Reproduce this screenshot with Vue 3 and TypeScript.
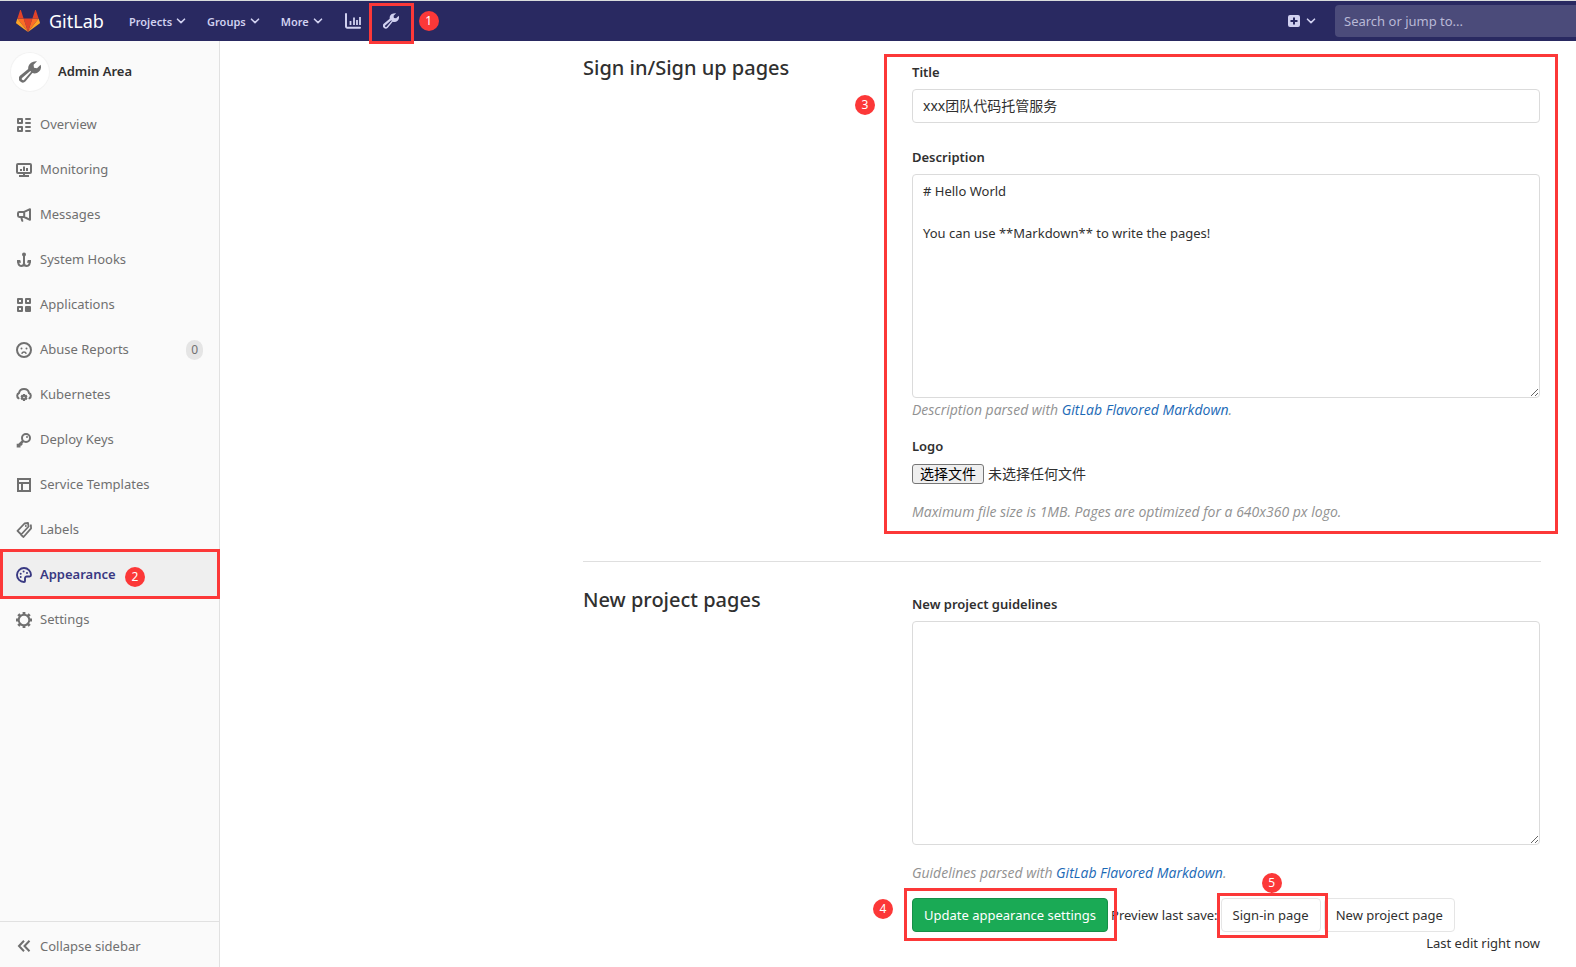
<script setup lang="ts">
import { ref } from 'vue'

interface NavItem {
  label: string
  icon: string
  count?: number
  active?: boolean
}

const menus: string[] = ['Projects', 'Groups', 'More']

const items: NavItem[] = [
  { label: 'Overview', icon: 'overview' },
  { label: 'Monitoring', icon: 'monitor' },
  { label: 'Messages', icon: 'messages' },
  { label: 'System Hooks', icon: 'hook' },
  { label: 'Applications', icon: 'applications' },
  { label: 'Abuse Reports', icon: 'abuse', count: 0 },
  { label: 'Kubernetes', icon: 'cloud' },
  { label: 'Deploy Keys', icon: 'key' },
  { label: 'Service Templates', icon: 'template' },
  { label: 'Labels', icon: 'labels' },
  { label: 'Appearance', icon: 'appearance', active: true },
  { label: 'Settings', icon: 'settings' },
]

const title = ref('xxx团队代码托管服务')
const description = ref('# Hello World\n\nYou can use **Markdown** to write the pages!')
const guidelines = ref('')
const search = ref('')
</script>

<template>
  <svg class="sprite" aria-hidden="true">
    <symbol id="wrench" viewBox="0 0 16 16">
      <path fill="currentColor" fill-rule="evenodd" d="M10.4.6a4.700 4.700 0 0 1 2.700-.4l-2.500 2.600.3 2.100 2.200.4 2.600-2.500a4.700 4.700 0 0 1-6 6l-4.900 6a2.900 2.900 0 0 1-4.100-4.100l6-4.900A4.700 4.700 0 0 1 10.400.6ZM8.200 7.300l-6 5.100a1 1 0 0 0 1.400 1.400l5.200-6-.6-.5Z" />
    </symbol>
    <symbol id="chevron" viewBox="0 0 10 10">
      <path d="m1.5 3.2 3.5 3.4 3.5-3.4" fill="none" stroke="currentColor" stroke-width="1.6" stroke-linecap="round" stroke-linejoin="round" />
    </symbol>
    <symbol id="overview" viewBox="0 0 16 16">
      <g fill="none" stroke="currentColor" stroke-width="2" stroke-linejoin="round">
        <rect x="2" y="2" width="4" height="4" /><rect x="2" y="10" width="4" height="4" />
        <path d="M10 2h4M10 6h4M10 10h4M10 14h4" stroke-linecap="round" />
      </g>
    </symbol>
    <symbol id="monitor" viewBox="0 0 16 16">
      <rect x="1" y="2" width="14" height="9" rx="1" fill="none" stroke="currentColor" stroke-width="2" />
      <path fill="currentColor" d="M7 11h2v2H7zM3 13h10v2H3zM4 7h2v2H4zM7 4.500h2V9H7zM10 6h2v3h-2z" />
    </symbol>
    <symbol id="messages" viewBox="0 0 16 16">
      <path fill="none" stroke="currentColor" stroke-width="2" stroke-linejoin="round" d="M8.200 4.900 14 2.200v10.600L8.200 10H3.400A1.400 1.400 0 0 1 2 8.600V6.300a1.400 1.400 0 0 1 1.400-1.400h4.800V10M5.200 10l1 3.700h1" />
    </symbol>
    <symbol id="hook" viewBox="0 0 16 16">
      <circle cx="8" cy="2.400" r="2" fill="currentColor" />
      <path d="M8 3v10M2.200 9.600c0 3 1.200 4.400 2.900 4.400C6.900 14 8 13 8 11.200 8 13 9.100 14 10.900 14c1.700 0 2.900-1.400 2.900-4.400" fill="none" stroke="currentColor" stroke-width="2" />
      <path fill="currentColor" d="M1 8h3.200l.8 2.800H1zM15 8h-3.200l-.8 2.800h4z" />
    </symbol>
    <symbol id="applications" viewBox="0 0 16 16">
      <path d="M2 2h4v4H2zM10 2h4v4h-4zM2 10h4v4H2z" fill="none" stroke="currentColor" stroke-width="2" stroke-linejoin="round" />
      <rect x="9" y="9" width="6" height="6" rx="1" fill="currentColor" />
    </symbol>
    <symbol id="abuse" viewBox="0 0 16 16">
      <circle cx="8" cy="8" r="7" fill="none" stroke="currentColor" stroke-width="2" />
      <circle cx="5.500" cy="6.500" r="1" fill="currentColor" /><circle cx="10.500" cy="6.500" r="1" fill="currentColor" />
      <path d="M6 11.300c.5-1.600 3.500-1.600 4 0" fill="none" stroke="currentColor" stroke-width="1.500" stroke-linecap="round" />
    </symbol>
    <symbol id="cloud" viewBox="0 0 16 16">
      <path d="M2.600 11.300A3 3 0 0 1 3 6C3.500 3.400 5.500 2 8 2s4.500 1.400 5 4a3 3 0 0 1 .4 5.300" fill="none" stroke="currentColor" stroke-width="2" stroke-linecap="round" />
      <path fill="currentColor" fill-rule="evenodd" d="M7 7h2l.3 1 1.200-.3 1 1.700-.8.900.8.900-1 1.700-1.200-.2L9 14H7l-.3-1.300-1.200.2-1-1.700.8-.9-.8-.9 1-1.700 1.200.3L7 7Zm1 2.700a.8.8 0 1 0 0 1.600.8.8 0 0 0 0-1.600Z" />
    </symbol>
    <symbol id="key" viewBox="0 0 16 16">
      <circle cx="10" cy="6" r="4" fill="none" stroke="currentColor" stroke-width="2" />
      <circle cx="11" cy="5" r="1" fill="currentColor" />
      <path d="m7.200 8.800-5.200 5.200M2 11.800v2.400h2.500M4.500 11.500l1.500 1.500" fill="none" stroke="currentColor" stroke-width="2.600" />
    </symbol>
    <symbol id="template" viewBox="0 0 16 16">
      <path d="M2 2h12v12H2zM2 6h12M6 6v8" fill="none" stroke="currentColor" stroke-width="2" />
    </symbol>
    <symbol id="labels" viewBox="0 0 16 16">
      <path d="M8.500 1.500 12 1l.6 3.500-7.400 8L1.500 8.800l7-7.300ZM14.800 2.500l.3 3.800L7.500 15l-2.600-2.200" fill="none" stroke="currentColor" stroke-width="1.800" stroke-linejoin="round" />
      <circle cx="9.800" cy="4" r="1" fill="currentColor" />
    </symbol>
    <symbol id="appearance" viewBox="0 0 16 16">
      <path d="M8 15A7 7 0 1 1 15 8c0 1-.5 1.500-1.500 1.500h-2.700A1.700 1.700 0 0 0 9 11.200V14c0 .6-.3 1-1 1Z" fill="none" stroke="currentColor" stroke-width="1.900" />
      <circle cx="4.700" cy="10" r="1" fill="currentColor" /><circle cx="4.700" cy="6.700" r="1" fill="currentColor" /><circle cx="7.600" cy="4.600" r="1" fill="currentColor" /><circle cx="11" cy="6" r="1" fill="currentColor" />
    </symbol>
    <symbol id="settings" viewBox="0 0 16 16">
      <circle cx="8" cy="8" r="5.300" fill="none" stroke="currentColor" stroke-width="2" />
      <path d="M8 0v2.800M8 13.200V16M0 8h2.800M13.200 8H16M2.300 2.300l2 2M11.700 11.700l2 2M2.300 13.700l2-2M11.700 4.300l2-2" stroke="currentColor" stroke-width="2.800" />
    </symbol>
    <symbol id="collapse" viewBox="0 0 16 16">
      <path d="M8 2.800 3 8l5 5.200M13.500 2.800 8.500 8l5 5.200" fill="none" stroke="currentColor" stroke-width="2" />
    </symbol>
  </svg>

  <div class="app">
    <header class="topbar">
      <a class="brand" href="#">
        <svg class="tanuki" viewBox="0 0 36 33" aria-hidden="true">
          <path fill="#e24329" d="M18 33 11.400 12.600h13.200z" />
          <path fill="#fc6d26" d="M18 33 11.400 12.600H2.100zM18 33l6.600-20.400h9.300z" />
          <path fill="#fca326" d="M2.100 12.600.1 18.800a1.400 1.400 0 0 0 .5 1.500L18 33zM33.900 12.600l2 6.200a1.400 1.400 0 0 1-.5 1.500L18 33z" />
          <path fill="#e24329" d="M2.100 12.600h9.300l-4-12.200c-.2-.6-1.100-.6-1.300 0zM33.900 12.600h-9.300l4-12.200c.2-.6 1.100-.6 1.300 0z" />
        </svg>
        <span>GitLab</span>
      </a>
      <nav class="menus" aria-label="Main">
        <button v-for="menu in menus" :key="menu" type="button" class="menu">
          {{ menu }}<svg class="chevron"><use href="#chevron" /></svg>
        </button>
      </nav>
      <a class="tool" href="#" aria-label="Analytics">
        <svg viewBox="0 0 16 16"><path d="M1 1v12.500a1.200 1.200 0 0 0 1.200 1.200H15" fill="none" stroke="currentColor" stroke-width="2" stroke-linecap="round" /><path d="M5.500 8v4M9 4.500V12M12 7v5M15 4v8" fill="none" stroke="currentColor" stroke-width="1.800" /></svg>
      </a>
      <a class="tool marked admin" href="#" aria-label="Admin Area">
        <svg><use href="#wrench" /></svg>
        <span class="frame"></span><span class="step">1</span>
      </a>
      <button type="button" class="create" aria-label="New">
        <svg class="plus" viewBox="0 0 12 12"><path fill="currentColor" fill-rule="evenodd" d="M2 0h8a2 2 0 0 1 2 2v8a2 2 0 0 1-2 2H2a2 2 0 0 1-2-2V2a2 2 0 0 1 2-2Zm3 2.500V5H2.500v2H5v2.500h2V7h2.500V5H7V2.500H5Z" /></svg>
        <svg class="chevron"><use href="#chevron" /></svg>
      </button>
      <input v-model="search" class="search" type="search" placeholder="Search or jump to..." aria-label="Search or jump to" />
    </header>

    <div class="body">
      <aside class="sidebar">
        <a class="context" href="#">
          <span class="avatar"><svg><use href="#wrench" /></svg></span>
          Admin Area
        </a>
        <nav class="items" aria-label="Admin">
          <a v-for="item in items" :key="item.label" href="#" class="item" :class="{ active: item.active, marked: item.active }">
            <svg><use :href="'#' + item.icon" /></svg>
            <span>{{ item.label }}</span>
            <span v-if="item.count !== undefined" class="count">{{ item.count }}</span>
            <template v-if="item.active"><span class="frame"></span><span class="step">2</span></template>
          </a>
        </nav>
        <button type="button" class="item collapse">
          <svg><use href="#collapse" /></svg><span>Collapse sidebar</span>
        </button>
      </aside>

      <main class="content">
        <section class="group">
          <h2>Sign in/Sign up pages</h2>
          <div class="fields marked signin">
            <label class="name" for="title">Title</label>
            <input id="title" v-model="title" class="box line" type="text" />
            <label class="name second" for="description">Description</label>
            <textarea id="description" v-model="description" class="box area"></textarea>
            <p class="hint">Description parsed with <a href="#">GitLab Flavored Markdown</a>.</p>
            <label class="name logo" for="logo">Logo</label>
            <div class="file">
              <input id="logo" type="file" />
              <label class="pick" for="logo">选择文件</label><span>未选择任何文件</span>
            </div>
            <p class="hint size">Maximum file size is 1MB. Pages are optimized for a 640x360 px logo.</p>
            <span class="frame"></span><span class="step">3</span>
          </div>
        </section>
        <hr />
        <section class="group">
          <h2>New project pages</h2>
          <div class="fields">
            <label class="name" for="guidelines">New project guidelines</label>
            <textarea id="guidelines" v-model="guidelines" class="box area"></textarea>
            <p class="hint guide">Guidelines parsed with <a href="#">GitLab Flavored Markdown</a>.</p>
            <div class="actions">
              <span class="marked update">
                <button type="submit" class="btn save">Update appearance settings</button>
                <span class="frame"></span><span class="step">4</span>
              </span>
              <span class="preview">Preview last save:</span>
              <span class="marked page">
                <a class="btn" href="#">Sign-in page</a>
                <span class="frame"></span><span class="step">5</span>
              </span>
              <a class="btn" href="#">New project page</a>
            </div>
            <p class="edited">Last edit right now</p>
          </div>
        </section>
      </main>
    </div>
  </div>
</template>

<style>
body {
  background: #fff;
}
</style>

<style scoped>
* {
  box-sizing: border-box;
}
.sprite {
  position: absolute;
  width: 0;
  height: 0;
}
.app {
  display: flex;
  flex-direction: column;
  min-height: 100vh;
  color: #303030;
  font: 13px/21px "Noto Sans", "Noto Sans CJK SC", sans-serif;
}
a {
  color: inherit;
  text-decoration: none;
}
button,
input,
textarea {
  font: inherit;
  color: inherit;
}
button {
  border: 0;
  background: none;
  padding: 0;
}
.topbar {
  display: flex;
  align-items: center;
  height: 41px;
  padding-left: 16px;
  border-top: 1px solid #d9dcdc;
  background: #292961;
  color: #d1d1f0;
}
.brand {
  display: flex;
  align-items: center;
  gap: 9px;
  width: 113px;
  color: #fff;
  font-size: 18px;
}
.tanuki {
  width: 24px;
  height: 22px;
}
.menus {
  display: flex;
  gap: 21px;
}
.menu {
  display: flex;
  align-items: center;
  gap: 4px;
  font-size: 11px;
  font-weight: 600;
}
.chevron {
  width: 10px;
  height: 10px;
}
.tool {
  display: flex;
  justify-content: center;
  width: 38px;
  margin-left: 11px;
}
.tool svg {
  width: 16px;
  height: 16px;
}
.tool.admin {
  margin-left: 0;
}
.create {
  display: flex;
  align-items: center;
  gap: 6px;
  margin-left: auto;
}
.plus {
  width: 12px;
  height: 12px;
}
.search {
  width: 241px;
  height: 32px;
  margin-left: 19px;
  padding: 0 9px;
  border: 0;
  border-radius: 4px 0 0 4px;
  background: #4b4b7a;
}
.search::placeholder {
  color: #b9b9d6;
  opacity: 1;
}

/* Tutorial call-outs */
.marked {
  position: relative;
}
.frame {
  position: absolute;
  border: 3px solid #fc3838;
  pointer-events: none;
}
.step {
  position: absolute;
  width: 20px;
  height: 20px;
  border-radius: 50%;
  background: #fc3838;
  color: #fff;
  font-size: 12px;
  font-weight: 400;
  line-height: 20px;
  text-align: center;
}
.admin .frame {
  inset: -10px -4px -15px -3px;
}
.admin .step {
  left: 47px;
  top: -2px;
}
.active .frame {
  inset: -3px -1px -2px 0;
}
.active .step {
  left: 125px;
  top: 15px;
}
.signin .frame {
  inset: -8px -18px -12px -28px;
}
.signin .step {
  left: -57px;
  top: 33px;
}
.update .frame {
  inset: -10px -9px -9px -8px;
}
.update .step {
  left: -39px;
  top: 1px;
}
.page .frame {
  inset: -5px -7px -6px -4px;
}
.page .step {
  left: 41px;
  top: -25px;
}

.body {
  display: flex;
  flex: 1;
}
.sidebar {
  display: flex;
  flex-direction: column;
  flex: none;
  width: 220px;
  border-right: 1px solid #e1e1e1;
  background: #fafafa;
  color: #707070;
}
.context {
  display: flex;
  align-items: center;
  gap: 9px;
  height: 61px;
  padding-left: 11px;
  color: #303030;
  font-weight: 600;
}
.avatar {
  display: grid;
  place-items: center;
  width: 38px;
  height: 38px;
  border-radius: 50%;
  background: #fff;
  box-shadow: 0 0 0 1px #f3f3f3;
  color: #707070;
}
.avatar svg {
  width: 22px;
  height: 22px;
}
.item {
  display: flex;
  align-items: center;
  gap: 8px;
  width: 100%;
  height: 45px;
  padding: 0 16px;
}
.item svg {
  width: 16px;
  height: 16px;
}
.active {
  background: #efefef;
  color: #393982;
  font-weight: 600;
}
.count {
  margin-left: auto;
  padding: 0 5px;
  border-radius: 10px;
  background: #e5e5e5;
  font-size: 12px;
  line-height: 20px;
}
.collapse {
  margin-top: auto;
  height: 46px;
  padding-top: 3px;
  border-top: 1px solid #e1e1e1;
}

.content {
  flex: 1;
  min-width: 0;
  padding: 13px 35px 12px 363px;
}
.group {
  display: grid;
  grid-template-columns: 329px 1fr;
}
h2 {
  margin: 0;
  font-size: 20px;
  font-weight: 500;
  line-height: 28px;
}
.fields {
  margin-right: 1px;
  padding-top: 8px;
}
.signin {
  margin-top: 8px;
  padding-top: 0;
}
.name {
  display: block;
  margin-bottom: 6px;
  font-weight: 600;
}
.second {
  margin-top: 24px;
}
.logo {
  margin-top: 16px;
}
.box {
  display: block;
  width: 100%;
  border: 1px solid #dbdbdb;
  border-radius: 4px;
  background: #fff;
}
.line {
  height: 34px;
  padding: 0 10px 2px;
  font-size: 14px;
}
.area {
  height: 224px;
  padding: 6px 10px;
  resize: both;
}
.hint {
  margin: 1px 0 0;
  color: #919191;
  font-family: "Open Sans", "Noto Sans", sans-serif;
  font-size: 14px;
  font-style: italic;
}
.hint a {
  color: #1b69b6;
}
.file {
  display: flex;
  align-items: center;
  gap: 4px;
  font-size: 14px;
}
.file input {
  position: absolute;
  width: 1px;
  height: 1px;
  opacity: 0;
}
.pick {
  padding: 0 7px;
  border: 1px solid #767676;
  border-radius: 3px;
  background: #efefef;
  color: #000;
  line-height: 18px;
}
.size {
  margin-top: 17px;
}
hr {
  margin: 39px 0 24px;
  border: 0;
  border-top: 1px solid #dfdfdf;
}
.guide {
  margin-top: 17px;
}
.actions {
  display: flex;
  align-items: center;
  gap: 3px;
  margin-top: 15px;
}
.btn {
  display: block;
  height: 34px;
  padding: 0 11px;
  border: 1px solid #e5e5e5;
  border-radius: 4px;
  line-height: 32px;
}
.save {
  border-color: #168f48;
  background: #1aaa55;
  color: #fff;
}
.edited {
  margin: 1px 0 0;
  text-align: right;
}
</style>
